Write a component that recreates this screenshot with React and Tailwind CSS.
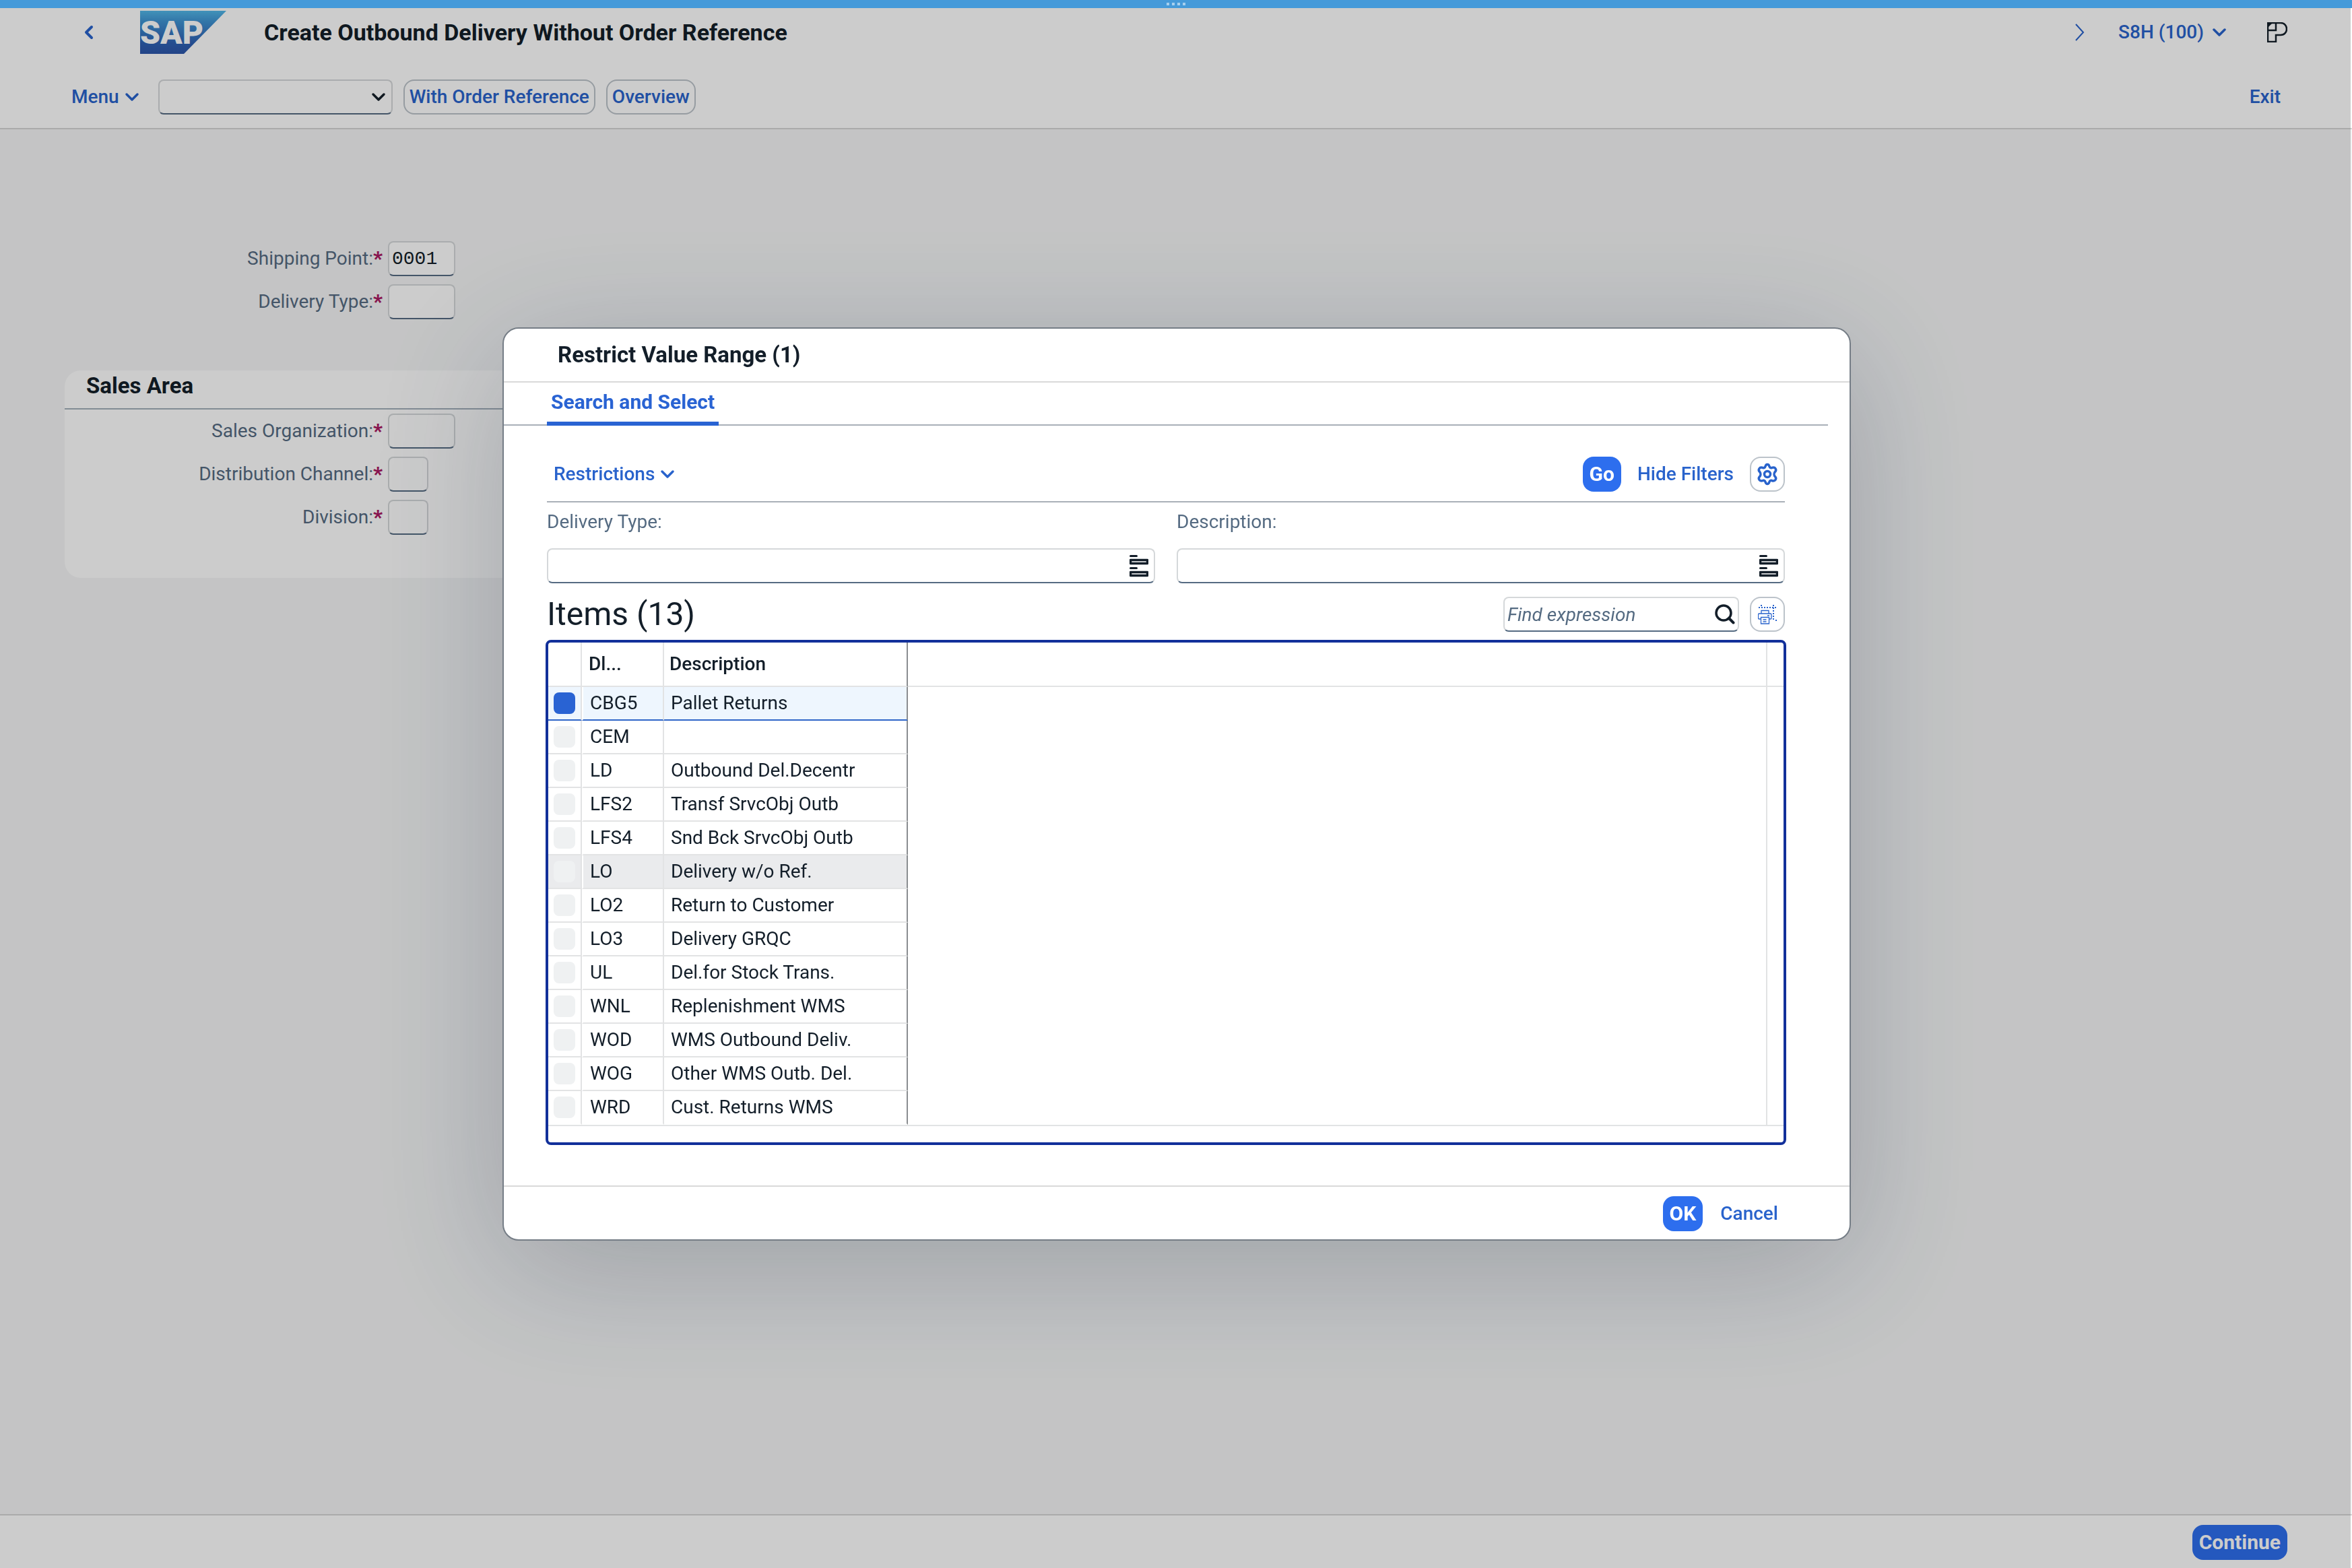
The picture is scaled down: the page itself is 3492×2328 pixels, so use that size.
import React, { useState } from "react";

const deliveryTypes = [
  { code: "CBG5", description: "Pallet Returns" },
  { code: "CEM", description: "" },
  { code: "LD", description: "Outbound Del.Decentr" },
  { code: "LFS2", description: "Transf SrvcObj Outb" },
  { code: "LFS4", description: "Snd Bck SrvcObj Outb" },
  { code: "LO", description: "Delivery w/o Ref." },
  { code: "LO2", description: "Return to Customer" },
  { code: "LO3", description: "Delivery GRQC" },
  { code: "UL", description: "Del.for Stock Trans." },
  { code: "WNL", description: "Replenishment WMS" },
  { code: "WOD", description: "WMS Outbound Deliv." },
  { code: "WOG", description: "Other WMS Outb. Del." },
  { code: "WRD", description: "Cust. Returns WMS" },
];

const inputClass =
  "h-[52px] rounded-lg border-2 border-[#d5d8da] border-b-[#556b82] bg-white text-[#131e29] outline-none";

const ChevronDown = ({ className }) => (
  <svg viewBox="0 0 22 14" className={`w-[22px] h-[14px] ${className || ""}`}>
    <path
      d="M3 3 L11 11 L19 3"
      fill="none"
      stroke="currentColor"
      strokeWidth="3.500"
      strokeLinecap="round"
      strokeLinejoin="round"
    />
  </svg>
);

const SapLogo = () => (
  <svg viewBox="0 0 128 64" className="w-32 h-16" aria-label="SAP">
    <defs>
      <linearGradient id="sapBlue" x1="0" y1="0" x2="0" y2="1">
        <stop offset="0" stopColor="#52b7e8" />
        <stop offset="0.25" stopColor="#3f93d2" />
        <stop offset="0.75" stopColor="#2e61b4" />
        <stop offset="1" stopColor="#2c56aa" />
      </linearGradient>
    </defs>
    <path d="M0 0 H128 L65 64 H0 Z" fill="url(#sapBlue)" />
    <text
      x="0"
      y="49"
      fontSize="48"
      fontWeight="900"
      fontFamily="Roboto, sans-serif"
      fill="#ffffff"
    >
      SAP
    </text>
  </svg>
);

const ProductIcon = () => (
  <svg viewBox="0 0 30 30" className="w-[30px] h-[30px]">
    <path
      d="M1 1 H20 C32 1 32 19 20 19 H13 V29 H1 Z M13 1 V12 H1"
      fill="none"
      stroke="#131e29"
      strokeWidth="2.500"
    />
    <path d="M1 1 H8 L1 8 Z" fill="#131e29" />
  </svg>
);

const GearIcon = () => (
  <svg viewBox="0 0 32 34" className="w-8 h-[34px]">
    <path
      d="M16 2.5 C18 2.5 18.6 4 19 5.600 C19.500 7.300 21 8 22.500 7.500 C24.500 6.900 26.500 6.300 28 8.600 C29.600 11 28.600 12.300 27.400 13.500 C25.600 15.500 25.600 18.500 27.400 20.500 C28.600 21.700 29.600 23 28 25.400 C26.500 27.700 24.500 27.100 22.500 26.500 C21 26 19.500 26.700 19 28.400 C18.600 30 18 31.500 16 31.500 C14 31.500 13.400 30 13 28.400 C12.500 26.700 11 26 9.500 26.500 C7.500 27.100 5.500 27.700 4 25.400 C2.400 23 3.400 21.700 4.600 20.500 C6.400 18.500 6.400 15.500 4.600 13.500 C3.400 12.300 2.400 11 4 8.600 C5.500 6.300 7.500 6.900 9.500 7.500 C11 8 12.500 7.300 13 5.600 C13.400 4 14 2.500 16 2.500 Z"
      fill="none"
      stroke="currentColor"
      strokeWidth="3.500"
    />
    <circle cx="16" cy="17" r="4.500" fill="none" stroke="currentColor" strokeWidth="3.500" />
  </svg>
);

const PrintIcon = () => (
  <svg viewBox="0 0 28 30" className="w-7 h-[30px]" fill="none" stroke="currentColor">
    <path d="M1 5 H28" strokeWidth="2" strokeDasharray="2 2" />
    <path d="M23 1 V24" strokeWidth="2" strokeDasharray="2 2" />
    <path d="M5 1 V3 M27 23 V25" strokeWidth="2" />
    <path
      d="M5 14 V9.500 H16 V14 M4 22 H1.500 C0.800 22 0.500 21.500 0.500 21 V15.500 C0.500 14.500 1 14 2 14 H18.500 C19.500 14 20 14.500 20 15.500 V21 C20 21.500 19.700 22 19 22 H17 M4.500 19.500 H16.500 V29 H4.500 Z M7.500 23 H12.500 M7.500 26 H12.500 M14 17 H17"
      strokeWidth="1.300"
    />
  </svg>
);

const SearchIcon = () => (
  <svg viewBox="0 0 30 30" className="w-[30px] h-[30px]">
    <circle cx="13" cy="13" r="11" fill="none" stroke="#131e29" strokeWidth="3.500" />
    <path d="M21 21 L27.500 27.500" stroke="#131e29" strokeWidth="4" strokeLinecap="round" />
  </svg>
);

const ValueHelpIcon = () => (
  <svg viewBox="0 0 28 34" className="w-7 h-[34px]" fill="none" stroke="#131e29">
    <path d="M1.500 2.500 H10.500 M1.500 20.500 H10.500" strokeWidth="3" strokeLinecap="round" />
    <path
      d="M1.500 8.500 H26.500 V13.500 H1.500 Z M1.500 26.500 H26.500 V31.500 H1.500 Z"
      strokeWidth="3.500"
      strokeLinejoin="round"
    />
  </svg>
);

const FormRow = ({ id, label, wide, value, labelClass }) => (
  <div className="flex items-center gap-2">
    <label htmlFor={id} className={`${labelClass} flex justify-end text-[#556b82]`}>
      {label}
      <span className="text-[30px] text-[#aa1a62] font-black">*</span>
    </label>
    <input
      id={id}
      type="text"
      defaultValue={value}
      className={`${inputClass} px-1 font-['Liberation_Mono',monospace] ${
        wide ? "w-[100px]" : "w-[60px]"
      }`}
    />
  </div>
);

const FilterField = ({ id, label }) => (
  <div className="flex flex-col gap-5">
    <label htmlFor={id} className="leading-[38px] text-[#556b82]">
      {label}
    </label>
    <div className={`${inputClass} flex items-center pr-2`}>
      <input id={id} type="text" className="flex-1 h-full px-2 outline-none" />
      <button type="button" aria-label={`Value help for ${label}`}>
        <ValueHelpIcon />
      </button>
    </div>
  </div>
);

const RestrictDialog = () => {
  const [selected, setSelected] = useState("CBG5");
  const [search, setSearch] = useState("");

  const rowColor = (code) => {
    if (code === selected) return "bg-[#eef6fe]";
    if (code === "LO") return "bg-[#eaebed]";
    return "bg-white";
  };

  return (
    <div
      role="dialog"
      aria-labelledby="dialog-title"
      className="w-full max-w-[2002px] rounded-3xl border-2 border-[#757d86] bg-white shadow-[0_40px_200px_rgba(34,53,72,0.25)]"
    >
      {/* Title */}
      <div className="h-20 pl-20 flex items-center border-b-2 border-[#d9d9d9]">
        <h2 id="dialog-title" className="text-[33px] font-bold">
          Restrict Value Range (1)
        </h2>
      </div>

      {/* Tabs */}
      <div className="h-16 mr-8 pl-16 flex border-b-2 border-[#a9b0b8]">
        <button
          type="button"
          className="h-16 px-[6px] border-b-6 border-[#2963d3] text-[#2963d3] text-[30px] font-bold"
        >
          Search and Select
        </button>
      </div>

      <div className="pl-16 pr-24 pt-[46px] pb-[60px]">
        {/* Filter toolbar */}
        <div className="pb-[14px] flex items-center border-b-2 border-[#a9b0b8]">
          <button
            type="button"
            className="h-[52px] px-[10px] flex items-center gap-2 font-medium text-[#2963cc]"
          >
            Restrictions
            <ChevronDown />
          </button>
          <div className="ml-auto flex items-center gap-4">
            <button
              type="button"
              className="h-[52px] px-[10px] rounded-2xl bg-[#2d6eee] text-white text-[30px] font-bold"
            >
              Go
            </button>
            <button type="button" className="h-[52px] px-2 font-medium text-[#2963cc]">
              Hide Filters
            </button>
            <button
              type="button"
              aria-label="Settings"
              className="size-[52px] flex items-center justify-center rounded-2xl border-2 border-[#bcc3ca] text-[#2963cc]"
            >
              <GearIcon />
            </button>
          </div>
        </div>

        {/* Filters */}
        <div className="grid grid-cols-2 gap-8 pt-[10px]">
          <FilterField id="filter-type" label="Delivery Type:" />
          <FilterField id="filter-description" label="Description:" />
        </div>

        {/* Items header */}
        <div className="pt-5 pb-3 flex items-center gap-4">
          <h3 className="mr-auto text-5xl leading-[52px]">Items (13)</h3>
          <div className={`${inputClass} w-[350px] flex items-center pr-1`}>
            <input
              type="search"
              aria-label="Find expression"
              placeholder="Find expression"
              value={search}
              onChange={(e) => setSearch(e.target.value)}
              className="flex-1 min-w-0 h-full px-1 italic outline-none placeholder:text-[#556b82]"
            />
            <button type="button" aria-label="Search">
              <SearchIcon />
            </button>
          </div>
          <button
            type="button"
            aria-label="Print"
            className="size-[52px] flex items-center justify-center rounded-2xl border-2 border-[#bcc3ca] text-[#2963cc]"
          >
            <PrintIcon />
          </button>
        </div>

        {/* Result table */}
        <div className="-mx-[2px] pb-6 rounded-lg border-4 border-[#12309a]">
          <div className="flex border-b-2 border-[#e2e3e4]">
            <table className="w-[534px] shrink-0 table-fixed border-separate border-spacing-0 text-left">
              <colgroup>
                <col className="w-[50px]" />
                <col className="w-[122px]" />
                <col className="w-[362px]" />
              </colgroup>
              <thead>
                <tr className="h-[66px] font-medium">
                  <td className="border-r-2 border-b-2 border-[#e2e3e4]"></td>
                  <th className="pl-[10px] pr-4 truncate font-medium border-r-2 border-b-2 border-[#e2e3e4]">
                    Dl...
                  </th>
                  <th className="pl-2 font-medium border-r-2 border-b-2 border-b-[#e2e3e4] border-r-[#8a8d90]">
                    Description
                  </th>
                </tr>
              </thead>
              <tbody>
                {deliveryTypes.map((item) => {
                  const line =
                    item.code === selected
                      ? "border-b-[#2f66c8]"
                      : item.code === "WRD"
                        ? "border-b-white"
                        : "border-b-[#e2e3e4]";
                  const cell = `border-b-2 ${line} ${rowColor(item.code)}`;
                  return (
                    <tr key={item.code} className="h-[50px]">
                      <td className={`${cell} border-r-2 border-r-[#e2e3e4]`}>
                        <input
                          type="checkbox"
                          aria-label={`Select ${item.code}`}
                          checked={item.code === selected}
                          onChange={() => setSelected(item.code)}
                          className="block ml-2 size-8 appearance-none rounded-lg bg-[#eff1f2] checked:bg-[#2963d3]"
                        />
                      </td>
                      <td
                        className={`${cell} pl-[10px] border-l-2 border-l-white border-r-2 border-r-[#e2e3e4]`}
                      >
                        {item.code}
                      </td>
                      <td className={`${cell} pl-[10px] border-r-2 border-r-[#8a8d90]`}>
                        {item.description}
                      </td>
                    </tr>
                  );
                })}
              </tbody>
            </table>
            <div className="flex-1">
              <div className="h-[66px] border-b-2 border-[#e2e3e4]"></div>
            </div>
            <div className="w-[26px] border-l-2 border-[#e2e3e4]">
              <div className="h-[66px] border-b-2 border-[#e2e3e4]"></div>
            </div>
          </div>
        </div>
      </div>

      {/* Actions */}
      <div className="pt-[14px] pb-3 pr-24 flex justify-end gap-4 border-t-2 border-[#d9d9d9]">
        <button
          type="button"
          className="h-[52px] px-[10px] rounded-2xl bg-[#2d6eee] text-white text-[30px] font-bold"
        >
          OK
        </button>
        <button type="button" className="h-[52px] px-[10px] font-medium text-[#2963cc]">
          Cancel
        </button>
      </div>
    </div>
  );
};

const App = () => {
  return (
    <div className="min-h-screen flex flex-col bg-[#f5f6f7] font-['Roboto',sans-serif] text-[28px] leading-8 text-[#131e29]">
      <div className="relative z-20 h-3 flex items-center justify-center gap-1 bg-[#459ad9]">
        <span className="size-1 bg-[#a6cfee]"></span>
        <span className="size-1 bg-[#a6cfee]"></span>
        <span className="size-1 bg-[#a6cfee]"></span>
        <span className="size-1 bg-[#a6cfee]"></span>
      </div>

      {/* Header */}
      <header className="bg-white border-b-2 border-[#d5d5d5]">
        <div className="h-[72px] pl-[124px] pr-24 flex items-center text-[#2963cc]">
          <button type="button" aria-label="Back">
            <svg viewBox="0 0 16 24" className="w-4 h-6">
              <path
                d="M12 4 L4 12 L12 20"
                fill="none"
                stroke="currentColor"
                strokeWidth="4"
                strokeLinecap="round"
                strokeLinejoin="round"
              />
            </svg>
          </button>
          <div className="ml-[68px] mr-14">
            <SapLogo />
          </div>
          <h1 className="text-[34px] font-bold text-[#131e29]">
            Create Outbound Delivery Without Order Reference
          </h1>
          <div className="ml-auto flex items-center">
            <svg viewBox="0 0 14 26" className="w-[14px] h-[26px]">
              <path d="M1 1 L12 13 L1 25" fill="none" stroke="currentColor" strokeWidth="2" />
            </svg>
            <button type="button" className="ml-[50px] mr-[60px] flex items-center gap-3 font-medium">
              S8H (100)
              <ChevronDown />
            </button>
            <ProductIcon />
          </div>
        </div>

        <div className="pt-[34px] pb-5 pl-[106px] pr-24 flex items-center font-medium text-[#2963cc]">
          <button type="button" className="flex items-center gap-2">
            Menu
            <ChevronDown />
          </button>
          <div className="relative ml-7 mr-4">
            <select
              aria-label="Command"
              className={`${inputClass} w-[348px] block appearance-none px-2`}
            >
              <option value=""></option>
            </select>
            <ChevronDown className="absolute right-[10px] top-[19px] text-[#131e29] pointer-events-none" />
          </div>
          <button
            type="button"
            className="h-[52px] px-[7px] mr-4 rounded-2xl border-2 border-[#bcc3ca]"
          >
            With Order Reference
          </button>
          <button type="button" className="h-[52px] px-[7px] rounded-2xl border-2 border-[#bcc3ca]">
            Overview
          </button>
          <button type="button" className="ml-auto px-[10px]">
            Exit
          </button>
        </div>
      </header>

      <main className="flex-1 pt-[166px]">
        <div className="flex flex-col gap-3">
          <FormRow id="shipping-point" label="Shipping Point:" value="0001" labelClass="w-[568px]" wide />
          <FormRow id="delivery-type" label="Delivery Type:" labelClass="w-[568px]" wide />
        </div>

        <section className="mt-[76px] ml-24 w-1/2 pb-16 rounded-3xl bg-white">
          <h2 className="h-[58px] pl-8 pt-[7px] text-[33px] font-bold border-b-2 border-[#a3afba]">
            Sales Area
          </h2>
          <div className="pt-[6px] flex flex-col gap-3">
            <FormRow id="sales-org" label="Sales Organization:" labelClass="w-[472px]" wide />
            <FormRow id="channel" label="Distribution Channel:" labelClass="w-[472px]" />
            <FormRow id="division" label="Division:" labelClass="w-[472px]" />
          </div>
        </section>
      </main>

      <footer className="pt-[14px] pb-3 pr-24 flex justify-end bg-white border-t-2 border-[#d5d5d5]">
        <button
          type="button"
          className="h-[52px] px-[10px] rounded-2xl bg-[#2d6eee] text-white text-[30px] font-bold"
        >
          Continue
        </button>
      </footer>

      <div className="fixed top-0 bottom-0 left-0 right-[2px] pl-1 z-10 flex items-center justify-center bg-black/20">
        <RestrictDialog />
      </div>
    </div>
  );
};

export default App;
